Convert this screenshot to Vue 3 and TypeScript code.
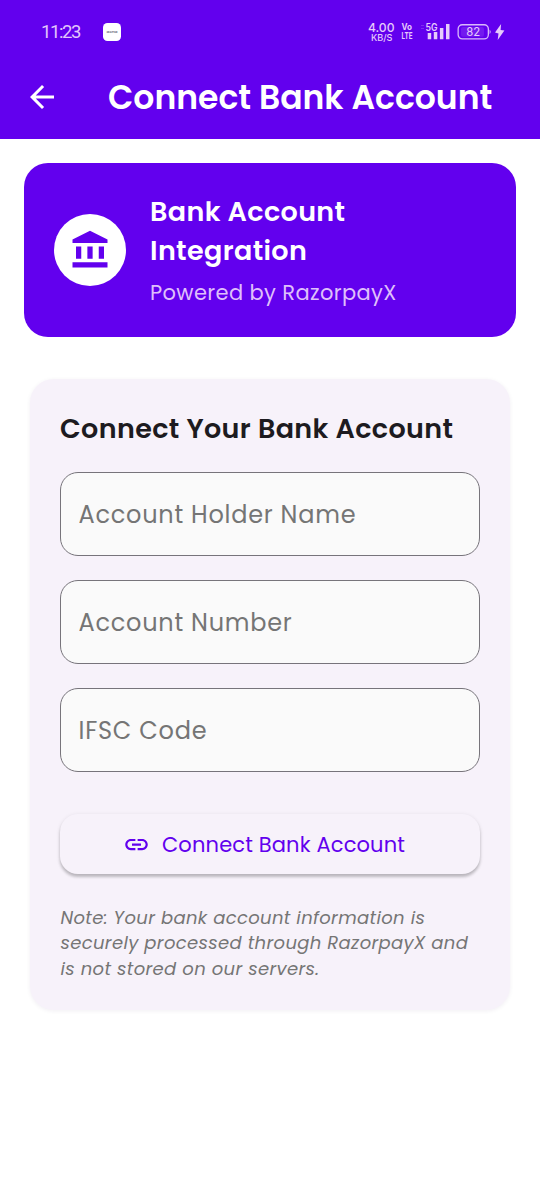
<script setup lang="ts">
import { reactive } from 'vue'

interface Field {
  key: 'holder' | 'number' | 'ifsc'
  label: string
}

const fields: Field[] = [
  { key: 'holder', label: 'Account Holder Name' },
  { key: 'number', label: 'Account Number' },
  { key: 'ifsc', label: 'IFSC Code' },
]

const form = reactive({ holder: '', number: '', ifsc: '' })

const noteLines: string[] = [
  'Note: Your bank account information is',
  'securely processed through RazorpayX and',
  'is not stored on our servers.',
]
</script>

<template>
  <div class="screen">
    <header class="top">
      <div class="status">
        <span class="clock">11:23</span>
        <span class="app-badge"><span>aorta</span></span>
        <div class="indicators">
          <svg class="speed" width="27" height="24" viewBox="0 -2 27 24">
            <text x="0" y="9.6" font-size="12.3" font-weight="500" textLength="26.5" lengthAdjust="spacingAndGlyphs">4.00</text>
            <text x="3" y="18.6" font-size="9.2" font-weight="500" textLength="21.5" lengthAdjust="spacingAndGlyphs">KB/S</text>
          </svg>
          <svg class="volte" width="12" height="24" viewBox="0 -2 12 24">
            <text x=".5" y="8.4" font-size="8.8" font-weight="700" textLength="10.5" lengthAdjust="spacingAndGlyphs">Vo</text>
            <text x=".5" y="17.2" font-size="9.2" font-weight="700" textLength="11" lengthAdjust="spacingAndGlyphs">LTE</text>
          </svg>
          <svg class="signal" width="30" height="20" viewBox="0 0 30 20">
            <text x="4.5" y="8.8" font-size="10" font-weight="600" textLength="12" lengthAdjust="spacingAndGlyphs">5G</text>
            <path d="M6.7 11h3.5v6.2H6.7zM12.8 10h3.5v7.2h-3.5zM18.9 6h3.5v11.2h-3.5zM25 2h3.5v15.2H25z" />
            <path d="M0 3h3v1H0zM0 6h3v1H0z" opacity=".22" />
          </svg>
          <svg class="battery" width="34" height="16" viewBox="0 0 34 16">
            <rect x=".15" y=".75" width="30.2" height="14.2" rx="4.2" fill="none" stroke="#d9b9fb" stroke-width="1.3" />
            <rect x="3" y="3" width="23" height="9.8" rx="2" opacity=".13" />
            <path d="M31.6 5.5q2 2.3 0 4.6z" />
            <text x="8.2" y="12.1" font-size="12" font-weight="400" textLength="14" lengthAdjust="spacingAndGlyphs">82</text>
          </svg>
          <svg class="bolt" width="10" height="16" viewBox="0 0 10 16">
            <path d="M6.1 0 0 8.6l3.5.8L2.7 16 9.4 6.6l-3.8-.5z" />
          </svg>
        </div>
      </div>
      <div class="app-bar">
        <button class="back" type="button" aria-label="Back">
          <svg width="36" height="36" viewBox="0 0 24 24">
            <path d="M20 11H7.83l5.59-5.59L12 4l-8 8 8 8 1.41-1.41L7.83 13H20v-2z" />
          </svg>
        </button>
        <h1>Connect Bank Account</h1>
      </div>
    </header>

    <main>
      <section class="banner">
        <div class="bank-icon">
          <svg width="42" height="42" viewBox="0 0 24 24">
            <path d="M4 10h3v7H4zM10.5 10h3v7h-3zM2 19h20v3H2zM17 10h3v7h-3zM12 1 2 6v2h20V6z" />
          </svg>
        </div>
        <div class="banner-text">
          <h2>Bank Account<br />Integration</h2>
          <p>Powered by RazorpayX</p>
        </div>
      </section>

      <form class="card" @submit.prevent>
        <h3>Connect Your Bank Account</h3>
        <input
          v-for="f in fields"
          :key="f.key"
          v-model="form[f.key]"
          :placeholder="f.label"
          :aria-label="f.label"
          type="text"
        />
        <button class="submit" type="submit">
          <svg width="27" height="27" viewBox="0 0 24 24">
            <path d="M3.9 12c0-1.71 1.39-3.1 3.1-3.1h4V7H7c-2.76 0-5 2.24-5 5s2.24 5 5 5h4v-1.9H7c-1.71 0-3.1-1.39-3.1-3.1zM8 13h8v-2H8v2zm9-6h-4v1.9h4c1.71 0 3.1 1.39 3.1 3.1s-1.39 3.1-3.1 3.1h-4V17h4c2.76 0 5-2.24 5-5s-2.24-5-5-5z" />
          </svg>
          <span>Connect Bank Account</span>
        </button>
        <p class="note">
          <span v-for="line in noteLines" :key="line">{{ line }}</span>
        </p>
      </form>
    </main>
  </div>
</template>

<style>
body {
  margin: 0;
  background: #fff;
}
</style>

<style scoped>
.screen {
  width: 540px;
  min-height: 1200px;
  background: #fff;
  font-family: Poppins, Inter, 'Liberation Sans', sans-serif;
  color: #1d1b20;
}
h1, h2, h3, p {
  margin: 0;
  white-space: nowrap;
}
.top {
  height: 139px;
  background: #6200ee;
  color: #fff;
}
.status {
  display: flex;
  align-items: center;
  height: 55px;
  padding: 8px 35px 0 41px;
  box-sizing: border-box;
  color: #e2c6fb;
}
.clock {
  width: 62px;
  font: 400 18.5px/24px Roboto, sans-serif;
  letter-spacing: -1.4px;
}
.app-badge {
  display: flex;
  align-items: center;
  justify-content: center;
  width: 18px;
  height: 18px;
  border-radius: 4.5px;
  background: #fff;
  color: #778;
  font-size: 4px;
  font-weight: 600;
}
.indicators {
  display: flex;
  align-items: center;
  margin-left: auto;
}
.indicators svg {
  overflow: visible;
  fill: #e6cbfb;
  font-family: Inter, sans-serif;
}
.speed { margin-right: 6px; }
.volte { margin-right: 8px; }
.signal { margin-right: 7px; }
.battery { margin-right: 3px; }

.app-bar {
  display: flex;
  align-items: center;
  height: 84px;
  padding-left: 24px;
}
.back {
  display: flex;
  width: 36px;
  padding: 0;
  border: 0;
  background: none;
  fill: #fff;
}
h1 {
  margin: 2px 0 0 48px;
  font-size: 33px;
  font-weight: 600;
}
main {
  padding: 24px 24px 0;
}
.banner {
  display: flex;
  align-items: center;
  height: 174px;
  padding: 0 30px;
  box-sizing: border-box;
  border-radius: 24px;
  background: #6200ee;
  color: #fff;
}
.bank-icon {
  display: flex;
  align-items: center;
  justify-content: center;
  width: 72px;
  height: 72px;
  margin-right: 24px;
  border-radius: 50%;
  background: #fff;
  fill: #6200ee;
}
h2 {
  font-size: 27px;
  font-weight: 600;
  letter-spacing: 0.375px;
  line-height: 39px;
}
.banner p {
  margin-top: 7px;
  color: #dfbffb;
  font-size: 21px;
  letter-spacing: 0.375px;
  line-height: 31px;
}
.card {
  display: flex;
  flex-direction: column;
  height: 631px;
  margin: 42px 6px 0;
  padding: 30px;
  box-sizing: border-box;
  border-radius: 24px;
  background: #f7f2fa;
  box-shadow: 0 1px 4px rgba(60, 30, 90, 0.07);
}
h3 {
  margin-bottom: 24px;
  font-size: 27px;
  font-weight: 600;
  letter-spacing: 0.375px;
  line-height: 39px;
}
input {
  flex: none;
  height: 84px;
  margin: 0 0 24px;
  padding: 0 17.5px;
  box-sizing: border-box;
  border: 1.5px solid #77747b;
  border-radius: 18px;
  outline: 0;
  background: #fafafa;
  color: #1d1b20;
  font: 400 24px Poppins, Inter, sans-serif;
  letter-spacing: 0.75px;
}
input::placeholder {
  color: #757575;
  opacity: 1;
}
.submit {
  display: flex;
  flex: none;
  align-items: center;
  height: 60px;
  margin: 18px 0 30px;
  padding: 0 0 0 63px;
  border: 0;
  border-radius: 18px;
  background: #f7f2fa;
  box-shadow: 0 3px 3px rgba(0, 0, 0, 0.2), 0 1px 4px rgba(0, 0, 0, 0.1);
  color: #6200ee;
  fill: #6200ee;
  font: 400 21px Poppins, Inter, sans-serif;
  letter-spacing: 0.15px;
  white-space: nowrap;
}
.submit span { margin: 0 0 0 12px; }
.note {
  padding: 0.5px 0 0 0.5px;
  color: #757575;
  font-size: 18px;
  font-style: italic;
  letter-spacing: 0.34px;
  line-height: 25.5px;
}
.note span { display: block; }
</style>
